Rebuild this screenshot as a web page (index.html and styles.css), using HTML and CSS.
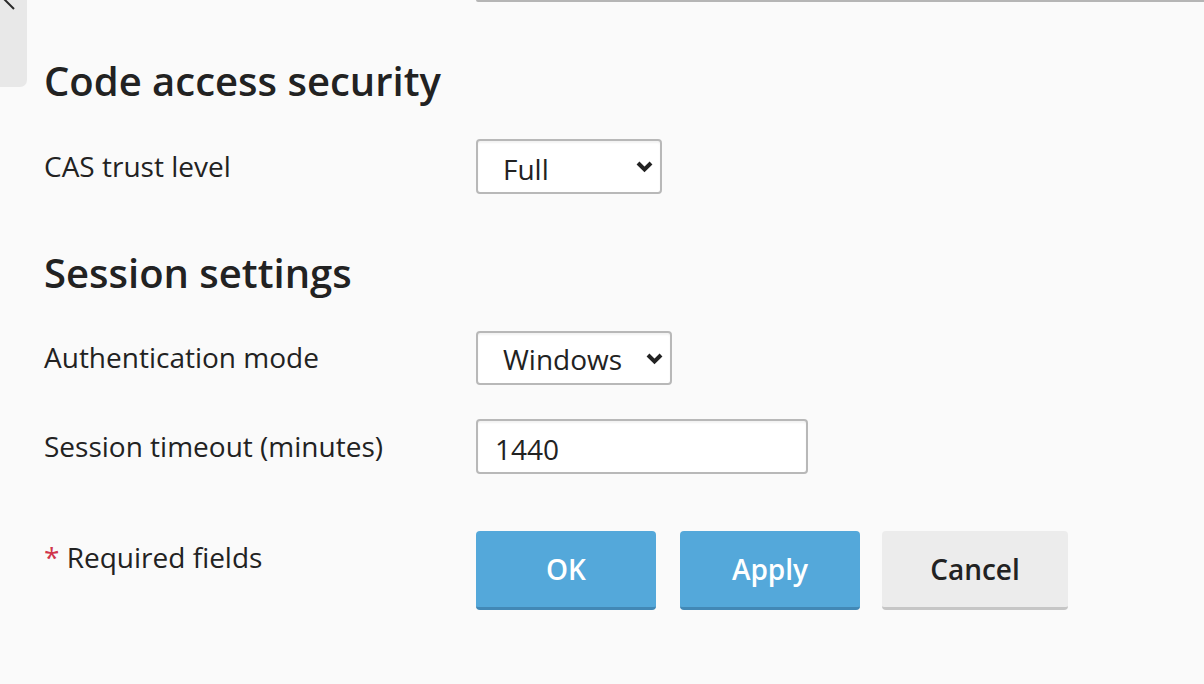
FILE: index.html
```html
<!DOCTYPE html>
<html lang="en">
<head>
<meta charset="utf-8">
<title>Settings</title>
<link rel="stylesheet" href="styles.css">
</head>
<body>
<div class="collapse-tab">
  <svg class="collapse-icon" width="20" height="30" viewBox="0 0 20 30"><polyline points="14,2 5,11 14,20" fill="none" stroke="#2a2a2a" stroke-width="2"/></svg>
</div>
<div class="page">
  <div class="prev-field"></div>

  <section class="section">
    <h2 class="section-title">Code access security</h2>
    <div class="row">
      <label class="label">CAS trust level</label>
      <div class="select-wrap">
        <select class="select select-trust"><option>Full</option><option>High</option><option>Medium</option></select>
        <svg class="chev" width="19" height="13" viewBox="0 0 19 13"><polyline points="3,3 9.5,9.5 16,3" fill="none" stroke="#222" stroke-width="4"/></svg>
      </div>
    </div>
  </section>

  <section class="section">
    <h2 class="section-title">Session settings</h2>
    <div class="row">
      <label class="label">Authentication mode</label>
      <div class="select-wrap">
        <select class="select select-auth"><option>Windows</option><option>Forms</option></select>
        <svg class="chev" width="19" height="13" viewBox="0 0 19 13"><polyline points="3,3 9.5,9.5 16,3" fill="none" stroke="#222" stroke-width="4"/></svg>
      </div>
    </div>
    <div class="row">
      <label class="label">Session timeout (minutes)</label>
      <input class="text-input" type="text" value="1440">
    </div>
  </section>

  <div class="actions-row">
    <div class="required"><span class="star">*</span> Required fields</div>
    <div class="buttons">
      <button class="btn btn-primary btn-ok">OK</button>
      <button class="btn btn-primary btn-apply">Apply</button>
      <button class="btn btn-default">Cancel</button>
    </div>
  </div>
</div>
</body>
</html>
```

FILE: styles.css
```css
html, body {
  margin: 0;
  padding: 0;
  background: #fafafa;
}
body {
  font-family: "Open Sans", "Noto Sans", sans-serif;
  color: #222;
  width: 1204px;
  height: 684px;
  overflow: hidden;
  position: relative;
}
.collapse-tab {
  position: absolute;
  left: 0;
  top: 0;
  width: 27px;
  height: 87px;
  background: #e8e8e8;
  border-bottom-right-radius: 7px;
  overflow: hidden;
}
.collapse-icon {
  position: absolute;
  left: 0;
  top: -11px;
}
.page {
  padding-left: 44px;
}
.prev-field {
  margin-left: 432px;
  height: 0;
  border-bottom: 2px solid #b5b5b5;
  border-bottom-left-radius: 4px;
}
.section {
  margin-top: 56px;
}
.section-title {
  margin: 0 0 33px 0;
  font-size: 40px;
  line-height: 46px;
  padding-bottom: 2px;
  font-weight: 600;
  color: #222;
}
.row {
  display: grid;
  grid-template-columns: 432px auto;
  align-items: center;
  justify-items: start;
  margin-bottom: 34px;
}
.row:last-child {
  margin-bottom: 0;
}
.label {
  font-size: 28px;
  line-height: 40px;
  padding-bottom: 2px;
  color: #222;
}
.select-wrap {
  position: relative;
}
.select {
  appearance: none;
  -webkit-appearance: none;
  font-family: "Open Sans", "Noto Sans", sans-serif;
  font-size: 28px;
  color: #222;
  height: 55px;
  padding: 4px 0 0 25px;
  background: #fff;
  border: 2px solid #b8b8b8;
  border-radius: 4px;
  box-shadow: inset 0 2px 2px rgba(0,0,0,0.05);
  box-sizing: border-box;
  display: block;
}
.select-trust { width: 186px; }
.select-auth { width: 196px; height: 54px; padding-top: 2px; }
.chev {
  position: absolute;
  right: 8px;
  top: 21px;
  pointer-events: none;
}
.text-input {
  font-family: "Open Sans", "Noto Sans", sans-serif;
  font-size: 28px;
  color: #222;
  width: 332px;
  height: 55px;
  box-sizing: border-box;
  padding: 4px 0 0 17px;
  background: #fff;
  border: 2px solid #b8b8b8;
  border-radius: 4px;
  box-shadow: inset 0 2px 2px rgba(0,0,0,0.05);
  outline: none;
}
.actions-row {
  display: grid;
  grid-template-columns: 432px auto;
  align-items: start;
  margin-top: 57px;
}
.required {
  font-size: 28px;
  line-height: 40px;
  padding-top: 6px;
  color: #222;
}
.star {
  color: #d0354b;
}
.buttons {
  display: flex;
}
.btn {
  font-family: "Open Sans", "Noto Sans", sans-serif;
  font-size: 28px;
  font-weight: 600;
  height: 79px;
  box-sizing: border-box;
  border: none;
  border-radius: 4px;
  padding: 0;
  cursor: pointer;
}
.btn-primary {
  background: #54a8da;
  color: #fff;
  border-bottom: 3px solid #4288b6;
}
.btn-ok {
  width: 180px;
  margin-right: 24px;
}
.btn-apply {
  width: 180px;
  margin-right: 22px;
}
.btn-default {
  width: 186px;
  background: #ececec;
  color: #222;
  border-bottom: 3px solid #c6c6c6;
}
```
